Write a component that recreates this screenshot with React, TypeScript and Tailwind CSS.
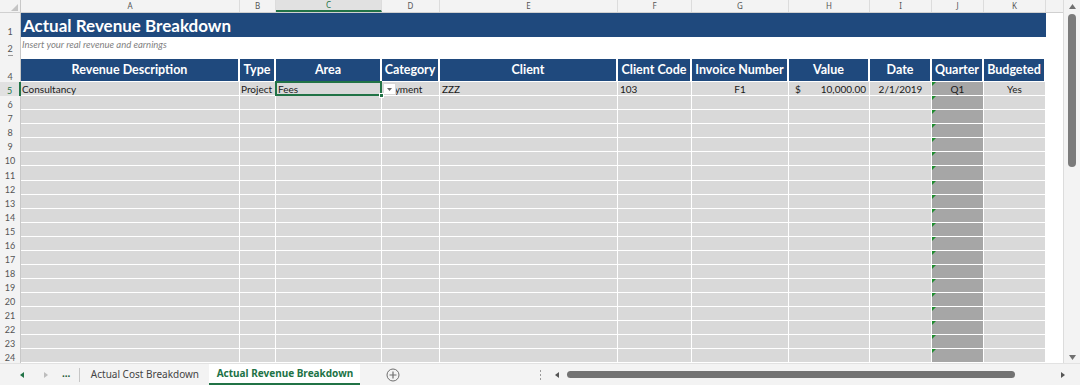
const cols = [
  { key: "A", w: "w-[219px]", label: "Revenue Description" },
  { key: "B", w: "w-[36px]", label: "Type" },
  { key: "C", w: "w-[106px]", label: "Area" },
  { key: "D", w: "w-[58px]", label: "Category" },
  { key: "E", w: "w-[178px]", label: "Client" },
  { key: "F", w: "w-[74px]", label: "Client Code" },
  { key: "G", w: "w-[97px]", label: "Invoice Number" },
  { key: "H", w: "w-[81px]", label: "Value" },
  { key: "I", w: "w-[62px]", label: "Date" },
  { key: "J", w: "w-[52px]", label: "Quarter" },
  { key: "K", w: "w-[62px]", label: "Budgeted" },
];

const emptyRows = Array.from({ length: 19 }, (_, i) => i + 6);

function RowNum({ n, active }: { n?: number; active?: boolean }) {
  return (
    <div
      className={
        "w-[21px] shrink-0 flex items-end justify-center pb-[1px] text-[9px] leading-none border-r " +
        (active
          ? "bg-[#e1e1e1] text-[#217346] border-r-2 border-[#217346]"
          : "bg-[#f3f3f3] text-[#555] border-[#c8c8c8]")
      }
    >
      {n}
    </div>
  );
}

function GreenFlag() {
  return (
    <svg className="absolute left-0 top-0" width="4" height="4" viewBox="0 0 4 4">
      <path d="M0 0H4L0 4Z" fill="#1e8c2e" />
    </svg>
  );
}

function DataRow({ n }: { n: number }) {
  return (
    <div className="flex h-[14.25px]">
      <RowNum n={n} />
      {cols.map((c) => (
        <div
          key={c.key}
          className={
            c.w +
            " shrink-0 relative border-r border-b border-white " +
            (c.key === "J" ? "bg-[#a6a6a6]" : "bg-[#d9d9d9]")
          }
        >
          {c.key === "J" && <GreenFlag />}
        </div>
      ))}
      <div className="flex-1" />
    </div>
  );
}

export default function App() {
  const cell = "shrink-0 relative border-r border-b border-white bg-[#d9d9d9] flex items-end pb-[1px] leading-none text-[10px] text-[#1a1a1a] overflow-hidden whitespace-nowrap";
  return (
    <div className="w-[1080px] h-[385px] flex flex-col bg-white overflow-hidden font-['Lato',sans-serif]">
      <div className="flex h-[363px]">
        <div className="flex-1 flex flex-col overflow-hidden">
          {/* column letters */}
          <div className="flex h-[13px] shrink-0 bg-[#f3f3f3] border-b border-[#d0d0d0] font-['Noto_Sans',sans-serif] text-[8px] text-[#555]">
            <div className="w-[21px] shrink-0 relative border-r border-[#c8c8c8]">
              <svg className="absolute right-[2px] bottom-[1px]" width="7" height="7" viewBox="0 0 7 7">
                <path d="M7 0V7H0Z" fill="#c4c4c4" />
              </svg>
            </div>
            {cols.map((c) => (
              <div
                key={c.key}
                className={
                  c.w +
                  " shrink-0 flex items-center justify-center border-r border-[#dcdcdc] " +
                  (c.key === "C" ? "bg-[#e1e1e1] text-[#217346] border-b-2 border-b-[#217346]" : "")
                }
              >
                {c.key}
              </div>
            ))}
            <div className="flex-1" />
          </div>

          {/* row 1 title */}
          <div className="flex h-[24px] shrink-0">
            <RowNum n={1} />
            <div className="w-[1025px] shrink-0 bg-[#1f497d] text-white font-bold text-[17px] flex items-center pl-[2px] pt-[1px]">
              Actual Revenue Breakdown
            </div>
            <div className="flex-1" />
          </div>

          {/* row 2 */}
          <div className="flex h-[17px] shrink-0">
            <RowNum n={2} />
            <div className="flex items-center pl-[1px] italic text-[9.5px] text-[#7f7f7f]">
              Insert your real revenue and earnings
            </div>
          </div>

          {/* row 3 */}
          <div className="flex h-[5px] shrink-0">
            <div className="w-[21px] shrink-0 bg-[#f3f3f3] border-r border-[#c8c8c8] flex justify-center">
              <div className="w-[5px] h-px bg-[#999] mt-[1px]" />
            </div>
          </div>

          {/* row 4 headers */}
          <div className="flex h-[23px] shrink-0">
            <RowNum n={4} />
            {cols.map((c) => (
              <div
                key={c.key}
                className={
                  c.w +
                  " shrink-0 bg-[#1f497d] border-r-2 border-b border-white text-white font-bold text-[12.5px] flex items-center justify-center pt-[1px] whitespace-nowrap overflow-hidden"
                }
              >
                {c.label}
              </div>
            ))}
            <div className="flex-1" />
          </div>

          {/* row 5 data */}
          <div className="flex h-[14.25px] shrink-0">
            <RowNum n={5} active />
            <div className={cols[0].w + " " + cell + " pl-[1px]"}>Consultancy</div>
            <div className={cols[1].w + " " + cell + " pl-[1px]"}>Project</div>
            <div className={cols[2].w + " " + cell + " pl-[2px] !overflow-visible z-10"}>
              Fees
              <div className="absolute -left-px -top-px -right-px -bottom-px border-2 border-[#217346]" />
              <div className="absolute -right-[3px] -bottom-[3px] w-[5px] h-[5px] bg-[#217346] border border-white" />
            </div>
            <div className={cols[3].w + " " + cell + " pl-[2px]"}>
              Payment
              <div className="absolute left-[1px] top-[1px] w-[13px] h-[12px] bg-white border border-[#d6d6d6] flex items-center justify-center">
                <svg width="5" height="3" viewBox="0 0 5 3">
                  <path d="M0 0H5L2.5 3Z" fill="#666" />
                </svg>
              </div>
            </div>
            <div className={cols[4].w + " " + cell + " pl-[2px]"}>ZZZ</div>
            <div className={cols[5].w + " " + cell + " pl-[2px]"}>103</div>
            <div className={cols[6].w + " " + cell + " justify-center"}>F1</div>
            <div className={cols[7].w + " " + cell + " justify-between pl-[6px] pr-[3px]"}>
              <span>$</span>
              <span>10,000.00</span>
            </div>
            <div className={cols[8].w + " " + cell + " justify-center"}>2/1/2019</div>
            <div className={cols[9].w + " " + cell + " justify-center !bg-[#a6a6a6]"}>
              <GreenFlag />
              Q1
            </div>
            <div className={cols[10].w + " " + cell + " justify-center"}>Yes</div>
            <div className="flex-1" />
          </div>

          {emptyRows.map((n) => (
            <DataRow key={n} n={n} />
          ))}
        </div>

        {/* vertical scrollbar */}
        <div className="w-[17px] shrink-0 bg-[#f3f3f3] border-l border-[#dcdcdc] flex flex-col items-center">
          <svg className="mt-[4px]" width="7" height="5" viewBox="0 0 7 5">
            <path d="M3.5 0L7 5H0Z" fill="#707070" />
          </svg>
          <div className="mt-[5px] w-[8px] h-[153px] rounded-full bg-[#7b7b7b]" />
          <div className="flex-1" />
          <svg className="mb-[3px]" width="7" height="5" viewBox="0 0 7 5">
            <path d="M0 0H7L3.5 5Z" fill="#707070" />
          </svg>
        </div>
      </div>

      {/* sheet tabs bar */}
      <div className="flex-1 flex items-stretch bg-[#f3f3f3] border-t border-[#e2e2e2] font-['Noto_Sans',sans-serif] text-[10px] text-[#444]">
        <div className="flex items-center pl-[20px]">
          <svg width="4" height="6" viewBox="0 0 4 6">
            <path d="M4 0V6L0 3Z" fill="#217346" />
          </svg>
          <svg className="ml-[20px]" width="4" height="6" viewBox="0 0 4 6">
            <path d="M0 0V6L4 3Z" fill="#bdbdbd" />
          </svg>
          <span className="ml-[14px] font-bold text-[#1e5a34] leading-none pb-[3px]">...</span>
          <div className="ml-[9px] w-px h-[14px] bg-[#c6c6c6]" />
        </div>
        <div className="w-[129px] flex items-center justify-center">Actual Cost Breakdown</div>
        <div className="w-[151px] flex items-center justify-center bg-white border-b-2 border-[#217346] font-bold text-[#217346]">
          Actual Revenue Breakdown
        </div>
        <div className="flex items-center ml-[26px]">
          <svg width="14" height="14" viewBox="0 0 14 14">
            <circle cx="7" cy="7" r="6" fill="none" stroke="#6f6f6f" strokeWidth="1" />
            <path d="M7 3.5V10.5M3.5 7H10.5" stroke="#6f6f6f" strokeWidth="1.2" />
          </svg>
        </div>
        <div className="flex-1" />
        <div className="w-[547px] flex items-center">
          <div className="ml-[7px] flex flex-col gap-[2px]">
            <div className="w-px h-[2px] bg-[#9a9a9a]" />
            <div className="w-px h-[2px] bg-[#9a9a9a]" />
            <div className="w-px h-[2px] bg-[#9a9a9a]" />
          </div>
          <svg className="ml-[14px]" width="4" height="6" viewBox="0 0 4 6">
            <path d="M4 0V6L0 3Z" fill="#555" />
          </svg>
          <div className="ml-[8px] w-[448px] h-[7px] rounded-full bg-[#737373]" />
          <div className="flex-1" />
          <svg className="mr-[15px]" width="4" height="6" viewBox="0 0 4 6">
            <path d="M0 0V6L4 3Z" fill="#555" />
          </svg>
        </div>
      </div>
    </div>
  );
}
